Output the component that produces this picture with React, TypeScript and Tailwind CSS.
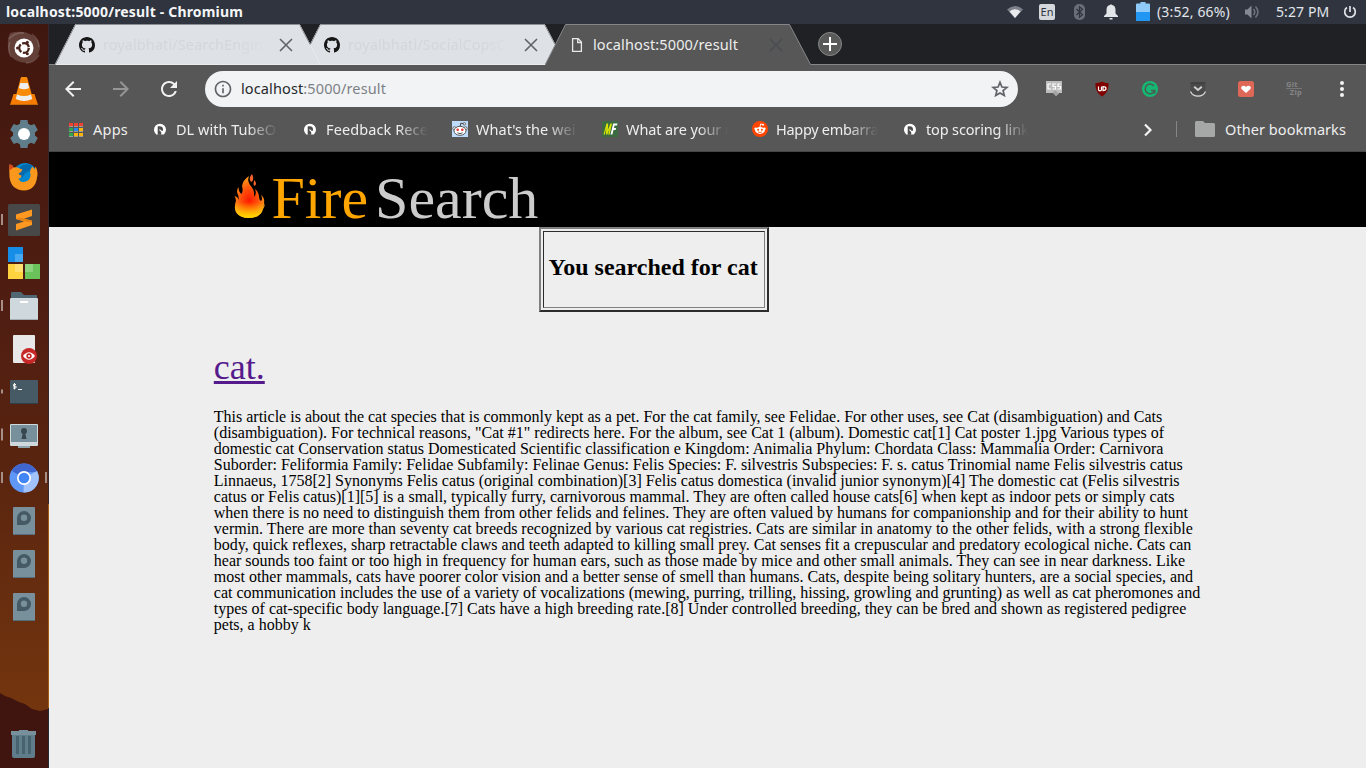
import React from "react";
import { MdArrowBack, MdArrowForward, MdRefresh, MdInfoOutline } from "react-icons/md";

const UI = "font-['Noto_Sans','Open_Sans',sans-serif]";

function GithubMark() {
  return (
    <svg className="h-4 w-4 shrink-0" viewBox="0 0 16 16" fill="#161616">
      <path d="M8 0C3.58 0 0 3.58 0 8c0 3.54 2.29 6.53 5.47 7.59.4.07.55-.17.55-.38 0-.19-.01-.82-.01-1.49-2.01.37-2.53-.49-2.69-.94-.09-.23-.48-.94-.82-1.13-.28-.15-.68-.52-.01-.53.63-.01 1.08.58 1.23.82.72 1.21 1.87.87 2.33.66.07-.52.28-.87.51-1.07-1.78-.2-3.64-.89-3.64-3.95 0-.87.31-1.59.82-2.15-.08-.2-.36-1.02.08-2.12 0 0 .67-.21 2.2.82.64-.18 1.32-.27 2-.27s1.36.09 2 .27c1.53-1.04 2.2-.82 2.2-.82.44 1.1.16 1.92.08 2.12.51.56.82 1.27.82 2.15 0 3.07-1.87 3.75-3.65 3.95.29.25.54.73.54 1.48 0 1.07-.01 1.93-.01 2.2 0 .21.15.46.55.38A8.01 8.01 0 0 0 16 8c0-4.42-3.58-8-8-8z" />
    </svg>
  );
}

function Cross({ color }: { color: string }) {
  return (
    <svg className="h-[14px] w-[14px] shrink-0" viewBox="0 0 14 14" stroke={color} strokeWidth="1.6" fill="none">
      <path d="M1 1l12 12M13 1L1 13" />
    </svg>
  );
}

function Tab({ title, active, className, titleClass }: { title: string; active?: boolean; className: string; titleClass: string }) {
  return (
    <div className={`relative flex h-[41px] w-[266px] shrink-0 items-center pl-6 ${className}`}>
      <svg className="absolute inset-0 h-[41px] w-[266px]" viewBox="0 0 266 41">
        <path d="M0 41L20.500 .5H244.500L266 41Z" fill={active ? "#575757" : "#dee1e6"} />
        <path
          d={active ? "M0 41L20.500 .5H244.500L265.500 40.500" : "M0 41L20.500 .5H244.500L265.500 40.500H0"}
          stroke={active ? "#85868a" : "#e9ebee"}
          fill="none"
        />
        {!active && <path d="M0 41L20.500 .5H244.500L255 20.500" stroke="#8d8e91" fill="none" />}
      </svg>
      <div className="relative flex items-center pt-[1px]">
        {active ? (
          <svg className="h-4 w-4" viewBox="0 0 16 16" fill="none" stroke="#e8e8e8" strokeWidth="1.300">
            <path d="M3.600 1.600h5.600l3.200 3.400v9.400H3.600zM8.700 1.800v3.700h3.500" />
          </svg>
        ) : (
          <GithubMark />
        )}
        <span className={`-mt-[2px] ml-2 w-[166px] overflow-hidden whitespace-nowrap text-[14.5px] leading-5 ${titleClass}`}>{title}</span>
        <span className="ml-[10px] flex">
          <Cross color={active ? "#4a4c51" : "#606368"} />
        </span>
      </div>
    </div>
  );
}

function NIcon() {
  return (
    <svg className="h-4 w-4" viewBox="0 0 16 16">
      <path d="M4 13.200A6 6 0 1 1 12 13.200V13.500H4z" fill="#fff" />
      <path d="M5.700 13.800V5.200h1.900c2.100 0 3.400 1.200 3.400 3.100v1.400H9.400L7.500 7.700v1.900l1.700 1.300v2.900z" fill="#4d4d4d" />
    </svg>
  );
}

function SnooIcon() {
  return (
    <svg className="h-4 w-4" viewBox="0 0 16 16">
      <rect width="16" height="16" fill="#bedcfa" />
      <path d="M8 5.500l.8-3.300 3.200.6" fill="none" stroke="#444" />
      <circle cx="12.300" cy="2.800" r="1.200" fill="#fff" stroke="#444" strokeWidth=".8" />
      <circle cx="2.500" cy="7.500" r="1.700" fill="#fff" stroke="#444" strokeWidth=".8" />
      <circle cx="13.500" cy="7.500" r="1.700" fill="#fff" stroke="#444" strokeWidth=".8" />
      <ellipse cx="8" cy="9.800" rx="6" ry="4.500" fill="#fff" stroke="#444" strokeWidth=".9" />
      <circle cx="5.700" cy="8.800" r="1.300" fill="#e33" />
      <circle cx="10.300" cy="8.800" r="1.300" fill="#e33" />
      <path d="M5.400 11.800q2.600 1.700 5.200 0" fill="none" stroke="#444" strokeWidth=".9" />
    </svg>
  );
}

function MfIcon() {
  return (
    <svg className="h-4 w-4" viewBox="0 0 16 16">
      <rect width="16" height="16" fill="#3c6b42" />
      <path d="M1.500 13.500L4.500 2.500h1.700L5.800 9l2.600-6.500H10L7.600 13.500H6.200l1.400-6-2.300 6H4l.2-6-1.400 6z" fill="#d8e500" />
      <path d="M8.500 13.500l2.700-11h4.300l-.5 2.100h-2.500L12 6.900h2.100l-.5 2h-2.100l-1.100 4.600z" fill="#fff" />
    </svg>
  );
}

function RedditIcon() {
  return (
    <svg className="h-4 w-4" viewBox="0 0 16 16">
      <circle cx="8" cy="8" r="8" fill="#ff4500" />
      <path d="M8 6l.6-3 2.300.5" fill="none" stroke="#fff" strokeWidth=".9" />
      <circle cx="11" cy="3.700" r="1" fill="#fff" />
      <circle cx="3.700" cy="7.800" r="1.400" fill="#fff" />
      <circle cx="12.300" cy="7.800" r="1.400" fill="#fff" />
      <ellipse cx="8" cy="9.400" rx="4.800" ry="3.500" fill="#fff" />
      <circle cx="6.100" cy="8.700" r="1" fill="#ff4500" />
      <circle cx="9.900" cy="8.700" r="1" fill="#ff4500" />
      <path d="M6 10.900q2 1.300 4 0" fill="none" stroke="#ff4500" strokeWidth=".8" />
    </svg>
  );
}

const bookmarks = [
  { icon: <NIcon />, label: "DL with TubeO", cls: "tracking-[0.02px]" },
  { icon: <NIcon />, label: "Feedback Rece", cls: "tracking-[0.1px]" },
  { icon: <SnooIcon />, label: "What's the wei", cls: "tracking-[0.02px]" },
  { icon: <MfIcon />, label: "What are your r", cls: "tracking-[-0.1px]" },
  { icon: <RedditIcon />, label: "Happy embarra", cls: "tracking-[-0.3px]" },
  { icon: <NIcon />, label: "top scoring link", cls: "tracking-[-0.15px]" },
];

function LauncherItem({ children, mark, focused, drop }: { children: React.ReactNode; mark?: number; focused?: boolean; drop?: number }) {
  return (
    <svg className="h-[43px] w-12 shrink-0" viewBox="0 0 48 43">
      {mark ? <rect x="1" y={21.500 - mark / 2} width="2" height={mark} fill="#a58f88" /> : null}
      {focused && <rect x="45" y="16" width="2" height="11" fill="#a58f88" />}
      <g transform={`translate(0 ${drop ?? 0})`}>{children}</g>
    </svg>
  );
}

function Disk() {
  return (
    <LauncherItem drop={0.5}>
      <rect x="13" y="7.500" width="22" height="28" rx="1" fill="#78909c" />
      <rect x="13" y="34.500" width="22" height="1" fill="#546e7a" />
      <path d="M17 25.500v-7.300a7 7 0 1 1 7 7.300z" fill="#455a64" />
      <circle cx="24" cy="18.300" r="3.200" fill="#78909c" />
    </LauncherItem>
  );
}

function Launcher() {
  return (
    <nav className="relative flex h-[744px] w-[49px] shrink-0 flex-col border-r border-[#35272b] bg-[linear-gradient(180deg,#40170f_0px,#481a10_120px,#4f1d12_280px,#59240f_440px,#672d0f_570px,#74360e_690px)] pt-[2px]">
      <svg className="absolute left-0 top-0 h-[744px] w-[49px]" viewBox="0 0 49 744">
        <path d="M0 669l5 3 6 2 8 4 6 2 7 5 8 2 8-2V744H0z" fill="#40140f" />
        <path d="M48.500 480V684" stroke="#a35b17" strokeWidth="1" />
        <path d="M48.500 684V744" stroke="#222b31" strokeWidth="1" />
      </svg>
      <div className="relative flex flex-col">
        <LauncherItem>
          <path d="M10 7q12-3 20 1 9 4 10 14-2 13-13 15Q12 36 9 26 6 16 10 7z" fill="#8c706a" opacity=".45" />
          <path d="M9 13q6-7 15-6M39 29q-5 8-13 8M11 31q-4-8-1-15M32 8q7 5 7 13" stroke="#cbbbb7" strokeWidth="1.500" fill="none" opacity=".25" />
          <circle cx="24" cy="22" r="9.500" fill="#fff" />
          <circle cx="24" cy="22" r="4.800" fill="none" stroke="#4a251d" strokeWidth="2.300" strokeDasharray="8.500 1.550" />
          <circle cx="17.500" cy="22" r="1.500" fill="#4a251d" />
          <circle cx="27.300" cy="16.300" r="1.500" fill="#4a251d" />
          <circle cx="27.300" cy="27.700" r="1.500" fill="#4a251d" />
        </LauncherItem>
        <LauncherItem>
          <path d="M13.500 25h21l3.500 11H10z" fill="#f57c00" />
          <path d="M22 8h4q1 0 1.300 1L33 30q-9 4-18 0l5.700-21Q21 8 22 8z" fill="#f98b08" />
          <path d="M20.300 14h7.400l1.400 5q-5 2.500-10.200 0zM17 25.500q7 3 14 0l1.200 4.500q-8 4-16.400 0z" fill="#eee" />
          <rect x="10" y="35" width="28" height="1" fill="#c66a08" />
        </LauncherItem>
        <LauncherItem>
          <g fill="#607d8b">
            <circle cx="24" cy="22" r="11" />
            <path d="M20.500 8h7l1 6h-9zM20.500 36h7l1-6h-9z" />
            <path d="M20.500 8h7l1 6h-9zM20.500 36h7l1-6h-9z" transform="rotate(60 24 22)" />
            <path d="M20.500 8h7l1 6h-9zM20.500 36h7l1-6h-9z" transform="rotate(120 24 22)" />
          </g>
          <circle cx="24" cy="22" r="6" fill="#fff" />
        </LauncherItem>
        <LauncherItem>
          <circle cx="25" cy="20" r="12" fill="#0288d1" />
          <path d="M20 12q6-5 12-1l-2 5-5 2-3 5-4-4z" fill="#0569ae" />
          <path d="M9.500 9.500q3 0 4 3 4-1 6 1l3 1q-1 3-4 4 1 2 3 2 0 3-3 3 2 5 7 3 5-1 5-7-1-3 0-5l2-3 2 3 1-3q3 5 1.500 11Q35.500 35 24 35.500 11 35 9.500 22q-.5-7 0-12.500z" fill="#f9981c" />
          <path d="M9.500 9.500q3 0 4 3l-4 3z" fill="#d9481c" />
        </LauncherItem>
        <LauncherItem mark={11}>
          <rect x="8" y="6" width="32" height="32" rx="1.500" fill="#484848" />
          <path d="M16 16.500l16-5v6.500l-8 2.700 8 2.300V27l-16 5.500V26l8-2.500-8-2.500z" fill="#ff9820" />
          <path d="M16 21l9 2.500 7 1v-2L20 19.500z" fill="#e88414" />
        </LauncherItem>
        <LauncherItem>
          <rect x="8" y="6" width="15" height="15" fill="#168ee8" />
          <rect x="15" y="13" width="8" height="8" fill="#49a9f0" />
          <rect x="8" y="23" width="15" height="15" fill="#ffd340" />
          <rect x="15" y="23" width="8" height="8" fill="#ffdf70" />
          <rect x="25" y="23" width="15" height="15" fill="#69c35a" />
          <rect x="25" y="23" width="8" height="8" fill="#8dd27f" />
        </LauncherItem>
        <LauncherItem mark={11} drop={1}>
          <path d="M11 13V8q0-1 1-1h9l3 3h13v8H11z" fill="#4f6874" />
          <rect x="10" y="13" width="28" height="22" rx="1" fill="#cfd8dc" />
          <rect x="10" y="34" width="28" height="1" fill="#a5adb0" />
          <rect x="20" y="16" width="8" height="2" fill="#fff" />
        </LauncherItem>
        <LauncherItem drop={1}>
          <rect x="13" y="7" width="22" height="28" rx="1" fill="#e8e8e8" />
          <circle cx="29" cy="28" r="8" fill="#c62828" />
          <path d="M23 28q6-7.500 12 0-6 7.500-12 0z" fill="#fff" />
          <circle cx="29" cy="28" r="2.700" fill="#c62828" />
          <circle cx="29" cy="28" r="1.100" fill="#fff" />
        </LauncherItem>
        <LauncherItem mark={4} drop={1}>
          <rect x="10" y="9" width="28" height="24" rx="1" fill="#455a64" />
          <rect x="10" y="32" width="28" height="1" fill="#2f3f46" />
          <path d="M16 13.500h-2.500v1.700H16v1.800h-3M14.500 12v6.500M18 18.500h4" stroke="#f0f0f0" strokeWidth="1" fill="none" />
        </LauncherItem>
        <LauncherItem mark={12} drop={1}>
          <rect x="18" y="31" width="12" height="3" fill="#90a4ae" />
          <rect x="10" y="10" width="28" height="22" rx="1" fill="#cfd8dc" />
          <rect x="11" y="11" width="26" height="17" fill="#78909c" />
          <circle cx="24" cy="17" r="3" fill="#37474f" />
          <path d="M23 18h2l1.500 7h-5z" fill="#37474f" />
        </LauncherItem>
        <LauncherItem mark={11} focused drop={1}>
          <circle cx="24" cy="21" r="14.500" fill="#5e97f6" />
          <path d="M24 21L11.500 13.700A14.500 14.500 0 0 1 36.500 13.700L38 15H24z" fill="#3f67cf" />
          <path d="M24 21l13-7A14.500 14.500 0 0 1 23.500 35.500z" fill="#a1c2fa" />
          <circle cx="24" cy="21" r="7" fill="#fff" />
          <circle cx="24" cy="21" r="5.300" fill="#4285f4" />
        </LauncherItem>
        <Disk />
        <Disk />
        <Disk />
      </div>
      <svg className="relative mb-[8px] mt-auto h-[32px] w-12" viewBox="0 0 48 32">
        <path d="M19 2h9v1h8v4H11V3h8z" fill="#78909c" />
        <path d="M12 7h23v21q0 2-2 2H14q-2 0-2-2z" fill="#607d8b" />
        <path d="M16 8h3v18h-3zM22 8h3v18h-3zM28 8h3v18h-3z" fill="#486270" />
      </svg>
    </nav>
  );
}

function TopBar() {
  return (
    <header className="flex h-6 items-center bg-[#2f343f] text-[#e2e5ea]">
      <span className="ml-[6px] whitespace-nowrap text-[14px] font-bold leading-6 tracking-[0.18px] text-[#f4f5f7]">localhost:5000/result - Chromium</span>
      <div className="ml-auto flex h-6 items-center">
        <svg className="h-4 w-4" viewBox="0 0 16 16">
          <path d="M0 5.500Q8-1.500 16 5.500L8 14z" fill="#7b8089" />
          <path d="M2.500 7.500Q8 3 13.500 7.500L8 14z" fill="#e8eaed" />
        </svg>
        <span className="ml-4 flex h-4 w-4 items-center justify-center rounded-[2px] bg-[#d5d8db] text-[11px] leading-4 text-[#2f343f]">En</span>
        <svg className="ml-[19px] h-4 w-[11px]" viewBox="0 0 11 16">
          <rect width="11" height="16" rx="5" fill="#6a6e77" />
          <path d="M2.500 5l6 5.700-3 2.600V2.700l3 2.600-6 5.700" stroke="#2f343f" strokeWidth="1.200" fill="none" />
        </svg>
        <svg className="ml-[19px] h-4 w-[14px]" viewBox="0 0 14 16">
          <path d="M6 1q1-1.500 2 0 3.500.7 3.500 5v3.500L14 12v1H0v-1l2.500-2.500V6Q2.500 1.700 6 1z" fill="#e2e5e8" />
          <rect x="5.500" y="14" width="3" height="1.500" fill="#e2e5e8" />
        </svg>
        <svg className="ml-[18px] h-[20px] w-[14px]" viewBox="0 0 14 20">
          <path d="M4.500 0h5v1.500H13q1 0 1 1V18q0 1-1 1H1q-1 0-1-1V2.500q0-1 1-1h3.500z" fill="#90caf9" />
          <path d="M0 10h14v8q0 1-1 1H1q-1 0-1-1z" fill="#2196f3" />
        </svg>
        <span className="ml-[7px] w-[87px] whitespace-nowrap text-[14px] leading-6 tracking-[0.15px]">(3:52, 66%)</span>
        <svg className="h-4 w-4" viewBox="0 0 16 16" fill="none" stroke="#6f747d" strokeWidth="1.500">
          <path d="M1 5.500h2.500L7.500 1.500v13l-4-4H1z" fill="#848992" stroke="none" />
          <path d="M9.500 5q2.500 3 0 6M11.500 2.500q5 5.500 0 11" />
        </svg>
        <span className="ml-4 w-[67px] whitespace-nowrap text-[14px] leading-6 tracking-[0.1px]">5:27 PM</span>
        <svg className="mr-[9px] h-4 w-[14px]" viewBox="0 0 14 16" fill="none" stroke="#dfe2e6" strokeWidth="1.700">
          <path d="M4 3.500a5.300 5.300 0 1 0 6 0M7 2v6" />
        </svg>
      </div>
    </header>
  );
}

function Extensions() {
  const cell = "flex w-12 items-center justify-center";
  return (
    <div className="ml-3 flex h-full">
      <div className={cell}>
        <svg className="h-4 w-4" viewBox="0 0 16 16">
          <path d="M0 0h16v12h-3l-3 3-3-3H0z" fill="#bdbdbd" />
          <path d="M5 3H2v5h3M10 3H7v2.500h2.500V8H6.500M14.500 3H12v2.500h2.500V8H11.500" fill="none" stroke="#fff" strokeWidth="1.200" />
          <path d="M7 11l2-1.500 4 3-3 2.500z" fill="#a3a3a3" />
        </svg>
      </div>
      <div className={cell}>
        <svg className="h-4 w-4" viewBox="0 0 16 16">
          <path d="M8 .5q3 1.800 6.700 1.700 0 9.500-6.700 13.300Q1.300 11.700 1.300 2.200 5 2.300 8 .5z" fill="#800000" />
          <path d="M4.500 5.500v3q0 1.300 1.500 1.300T7.500 8.500v-3M9 5.600v4q3 0 3-2t-3-2z" fill="none" stroke="#fff" strokeWidth="1.200" />
        </svg>
      </div>
      <div className={cell}>
        <svg className="h-4 w-4" viewBox="0 0 16 16">
          <circle cx="8" cy="8" r="8" fill="#14b873" />
          <path d="M12 5A4.900 4.900 0 1 0 12.700 9.500H9M12.700 9.500v3" fill="none" stroke="#4c5b54" strokeWidth="1.500" />
        </svg>
      </div>
      <div className={cell}>
        <svg className="h-4 w-4" viewBox="0 0 16 16">
          <path d="M.5 2.500h15v5q0 6-7.500 6t-7.500-6z" fill="#4a4a4a" />
          <path d="M.5 2h15" stroke="#303030" />
          <path d="M.5 10.500q2 4.700 7.500 4.700t7.500-4.700" stroke="#dedede" strokeWidth="1.200" fill="none" />
          <path d="M4.200 5.700L8 9l3.800-3.300" stroke="#d0d0d0" strokeWidth="2" fill="none" />
        </svg>
      </div>
      <div className={cell}>
        <svg className="h-4 w-4" viewBox="0 0 16 16">
          <rect width="16" height="16" rx="2.500" fill="#de6757" />
          <path d="M8 12L3.500 8q-1-2.500 1.500-3.200Q7 4.600 8 6q1-1.400 3-1.200 2.500.7 1.500 3.200z" fill="#fff" />
        </svg>
      </div>
      <div className={cell}>
        <div className="flex h-4 w-4 flex-col text-[7.5px] font-bold leading-[7px] tracking-[0.3px] text-[#858585]">
          <span>Git</span>
          <span className="h-px w-4 shrink-0 bg-[#777]" />
          <span className="self-end">Zip</span>
        </div>
      </div>
      <div className={cell}>
        <svg className="h-4 w-4" viewBox="0 0 16 16" fill="#f2f2f2">
          <circle cx="8" cy="2" r="2" />
          <circle cx="8" cy="8" r="2" />
          <circle cx="8" cy="14" r="2" />
        </svg>
      </div>
    </div>
  );
}

function BrowserChrome() {
  const nav = "flex w-12 items-center justify-center";
  return (
    <div className="h-[128px] bg-[#575757] text-[#eeeeee]">
      <div className="flex h-[41px] bg-[#202124] pl-[6px] shadow-[inset_0_-1px_0_#85868a]">
        <Tab title="royalbhati/SearchEngin" className="z-20" titleClass="text-[#d3d7db] tracking-[0.08px] [mask-image:linear-gradient(90deg,#000_80%,transparent_100%)]" />
        <Tab title="royalbhati/SocialCopsC" className="z-10 -ml-[21px]" titleClass="text-[#d3d7db] tracking-[0.08px] [mask-image:linear-gradient(90deg,#000_80%,transparent_100%)]" />
        <Tab title="localhost:5000/result" active className="z-30 -ml-[21px]" titleClass="text-[#ededed] tracking-[0.12px]" />
        <svg className="ml-[7px] mt-[8px] h-6 w-6" viewBox="0 0 24 24">
          <circle cx="12" cy="12" r="11.500" fill="#5a5a5a" stroke="#88898b" />
          <path d="M12 5v14M5 12h14" stroke="#fff" strokeWidth="2" />
        </svg>
      </div>
      <div className="flex h-12 items-center">
        <div className={nav}><MdArrowBack size={24} color="#f2f2f2" /></div>
        <div className={nav}><MdArrowForward size={24} color="#969696" /></div>
        <div className={nav}><MdRefresh size={24} color="#f2f2f2" /></div>
        <div className="ml-3 flex h-9 w-[813px] items-center rounded-full bg-[#f1f3f4] pl-[8px] pr-[8px]">
          <MdInfoOutline size={20} color="#5f6368" />
          <span className="-mt-[2px] ml-[8px] whitespace-nowrap text-[14.5px] leading-5 tracking-[0.12px] text-[#27292c]">
            localhost<span className="text-[#7d8186]">:5000/result</span>
          </span>
          <svg className="ml-auto h-5 w-5" viewBox="0 0 20 20" fill="none" stroke="#5f6368" strokeWidth="1.700">
            <path d="M10 3.300l1.900 4.700 5 .4-3.800 3.200 1.200 4.900L10 13.900l-4.300 2.600 1.200-4.900L3.100 8.400l5-.4z" />
          </svg>
        </div>
        <Extensions />
      </div>
      <div className="flex h-[39px] items-center border-b border-[#454545] pb-[6px] pl-5 text-[14.5px] leading-5">
        <svg className="mt-[2px] h-[14px] w-[14px]" viewBox="0 0 14 14">
          <path d="M0 0h4v3H0zM5 0h4v3H5zM10 0h4v3h-4z" fill="#f04030" />
          <path d="M0 5h4v3H0zM0 10h4v3H0z" fill="#2fa84f" />
          <path d="M5 5h4v3H5z" fill="#2489f5" />
          <path d="M10 5h4v3h-4zM5 10h4v3H5zM10 10h4v3h-4z" fill="#f9b50b" />
          <path d="M0 3h4v1H0zM5 3h4v1H5zM10 3h4v1h-4zM0 13h4v1H0zM5 13h4v1H5zM10 13h4v1h-4zM0 8h4v1H0zM5 8h4v1H5zM10 8h4v1h-4z" fill="#9b9b9b" />
        </svg>
        <span className="ml-[10px] w-[59px] tracking-[0.25px]">Apps</span>
        {bookmarks.map((b) => (
          <div key={b.label} className="flex w-[150px] shrink-0 items-center">
            {b.icon}
            <span className={`ml-2 w-[102px] overflow-hidden whitespace-nowrap [mask-image:linear-gradient(90deg,#000_70%,transparent_100%)] ${b.cls}`}>{b.label}</span>
          </div>
        ))}
        <svg className="ml-[91px] mt-px h-[14px] w-[10px]" viewBox="0 0 10 14" fill="none" stroke="#f2f2f2" strokeWidth="2.200">
          <path d="M2 1.500L7.500 7 2 12.500" />
        </svg>
        <span className="ml-[23px] h-4 w-px bg-[#858585]" />
        <svg className="ml-[18px] h-4 w-5" viewBox="0 0 20 16" fill="#a5a8a7">
          <path d="M1.500 0H8l2 2h8.500Q20 2 20 3.500v11q0 1.500-1.500 1.500h-17Q0 16 0 14.500v-13Q0 0 1.500 0z" />
        </svg>
        <span className="ml-[10px] whitespace-nowrap tracking-[0.06px]">Other bookmarks</span>
      </div>
    </div>
  );
}

function Flame() {
  const body =
    "M14 45C5 45 0 39 1 33q0-3 1-5Q2 25 .5 23q4 1 4.500 5Q5 23 3 19q0-3 1.500-5 0 5 3 7 2-3 .5-8 1-6 7-10-2 5 1 9 5 5 4 12 3-3 1-8 3 2 4 7 0 4 2 5 2-2 0-6 4 3 3 8 0 3-.5 4 1-1 1.500-4Q32 31 29 36q-2 9-15 9z";
  return (
    <svg className="h-[46px] w-[31px]" viewBox="0 0 31 46">
      <defs>
        <radialGradient id="flame" cx="0.480" cy="0.580" r="0.550">
          <stop offset="0" stopColor="#ff1a00" />
          <stop offset=".45" stopColor="#ff4a0a" />
          <stop offset="1" stopColor="#ff9a1a" />
        </radialGradient>
        <linearGradient id="glow" x1="0" y1="0" x2="0" y2="1">
          <stop offset=".62" stopColor="#ffd400" stopOpacity="0" />
          <stop offset=".97" stopColor="#ffd400" />
        </linearGradient>
      </defs>
      <path d={body} fill="url(#flame)" />
      <path d={body} fill="url(#glow)" />
      <path d="M18 1q-4 4-1 8 4-2 1-8zM20.500 7q-2 4 0 6 3-2 0-6z" fill="#f4632a" />
    </svg>
  );
}

const article =
  'This article is about the cat species that is commonly kept as a pet. For the cat family, see Felidae. For other uses, see Cat (disambiguation) and Cats (disambiguation). For technical reasons, "Cat #1" redirects here. For the album, see Cat 1 (album). Domestic cat[1] Cat poster 1.jpg Various types of domestic cat Conservation status Domesticated Scientific classification e Kingdom: Animalia Phylum: Chordata Class: Mammalia Order: Carnivora Suborder: Feliformia Family: Felidae Subfamily: Felinae Genus: Felis Species: F. silvestris Subspecies: F. s. catus Trinomial name Felis silvestris catus Linnaeus, 1758[2] Synonyms Felis catus (original combination)[3] Felis catus domestica (invalid junior synonym)[4] The domestic cat (Felis silvestris catus or Felis catus)[1][5] is a small, typically furry, carnivorous mammal. They are often called house cats[6] when kept as indoor pets or simply cats when there is no need to distinguish them from other felids and felines. They are often valued by humans for companionship and for their ability to hunt vermin. There are more than seventy cat breeds recognized by various cat registries. Cats are similar in anatomy to the other felids, with a strong flexible body, quick reflexes, sharp retractable claws and teeth adapted to killing small prey. Cat senses fit a crepuscular and predatory ecological niche. Cats can hear sounds too faint or too high in frequency for human ears, such as those made by mice and other small animals. They can see in near darkness. Like most other mammals, cats have poorer color vision and a better sense of smell than humans. Cats, despite being solitary hunters, are a social species, and cat communication includes the use of a variety of vocalizations (mewing, purring, trilling, hissing, growling and grunting) as well as cat pheromones and types of cat-specific body language.[7] Cats have a high breeding rate.[8] Under controlled breeding, they can be bred and shown as registered pedigree pets, a hobby k';

function Page() {
  return (
    <main className="flex-1 bg-[#eeeeee] font-['Liberation_Serif',serif] text-black">
      <div className="flex h-[75px] bg-black pl-[185px] pt-[21px]">
        <Flame />
        <div className="ml-[6.4px] flex whitespace-nowrap text-[60px] leading-[50px]">
          <span className="text-[#ffa500]">Fire</span>
          <span className="ml-[7px] text-[#cccccc]">Search</span>
        </div>
      </div>
      <div className="ml-[490px] h-[85px] w-[230px] border-2 border-b-[#2c2c2c] border-l-[#808080] border-r-[#2c2c2c] border-t-[#808080] p-[2px]">
        <div className="h-[77px] border border-b-[#808080] border-l-[#2c2c2c] border-r-[#808080] border-t-[#2c2c2c] pt-[22px]">
          <h2 className="whitespace-nowrap pl-[4.6px] text-[24px] font-bold leading-[27px]">You searched for cat</h2>
        </div>
      </div>
      <section className="ml-[164.8px] w-[988px] pt-[35px]">
        <a className="block text-[36px] leading-[41px] text-[#551a8b] underline decoration-[3px]">cat.</a>
        <p className="mt-[21px] text-[16px] leading-[16px]">{article}</p>
      </section>
    </main>
  );
}

export default function App() {
  return (
    <div className={`flex h-[768px] w-[1366px] flex-col overflow-hidden ${UI}`}>
      <TopBar />
      <div className="flex h-[744px]">
        <Launcher />
        <div className="flex w-[1317px] flex-col">
          <BrowserChrome />
          <Page />
        </div>
      </div>
    </div>
  );
}
